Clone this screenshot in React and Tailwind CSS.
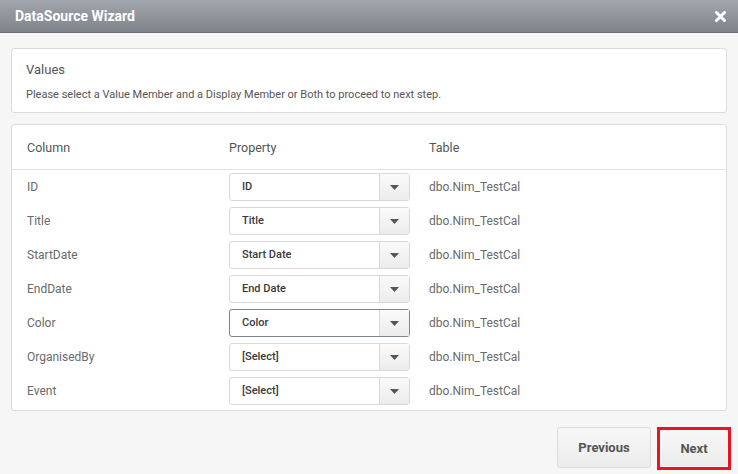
const rows = [
  { column: 'ID', value: 'ID' },
  { column: 'Title', value: 'Title' },
  { column: 'StartDate', value: 'Start Date' },
  { column: 'EndDate', value: 'End Date' },
  { column: 'Color', value: 'Color', focused: true },
  { column: 'OrganisedBy', value: '[Select]' },
  { column: 'Event', value: '[Select]' },
]

function SelectBox({ value, focused }) {
  return (
    <div
      className={`flex h-[28px] w-[181px] items-stretch rounded-[3px] border bg-white ${
        focused ? 'border-[#7d8590]' : 'border-[#d6d9dd]'
      }`}
    >
      <div className="flex flex-1 items-center pl-[12px] text-[11px] font-medium text-[#3a3a3a]">{value}</div>
      <div className="flex w-[30px] items-center justify-center border-l border-[#d6d9dd] bg-gradient-to-b from-[#fafafa] to-[#ececec]">
        <svg width="9" height="5" viewBox="0 0 9 5">
          <path d="M0 0h9L4.5 5z" fill="#555" />
        </svg>
      </div>
    </div>
  )
}

export default function App() {
  return (
    <div className="flex h-[474px] w-[738px] flex-col bg-[#f6f6f6] font-['Roboto',sans-serif]">
      <div className="flex h-[33px] items-center justify-between border-b border-[#6e737b] bg-gradient-to-b from-[#a2a6ac] to-[#7f838b] px-[15px]">
        <span className="text-[14px] font-bold text-white">DataSource Wizard</span>
        <svg width="11" height="11" viewBox="0 0 11 11" className="mr-[-3px]">
          <path d="M1.5 1.5l8 8M9.5 1.5l-8 8" stroke="white" strokeWidth="3" strokeLinecap="round" />
        </svg>
      </div>

      <div className="mx-[11px] mt-[15px] flex h-[65px] flex-col rounded-[3px] border border-[#dcdcdc] bg-white px-[14px]">
        <div className="mt-[11px] text-[13px] text-[#555]">Values</div>
        <div className="mt-[7px] text-[11px] text-[#555]">
          Please select a Value Member and a Display Member or Both to proceed to next step.
        </div>
      </div>

      <div className="mx-[11px] mt-[11px] flex h-[287px] flex-col rounded-[3px] border border-[#dcdcdc] bg-white">
        <div className="flex h-[45px] items-center border-b border-[#e2e2e2] pt-[2px] text-[12.5px] text-[#555]">
          <div className="w-[217px] pl-[15px]">Column</div>
          <div className="w-[200px]">Property</div>
          <div>Table</div>
        </div>
        {rows.map((r) => (
          <div key={r.column} className="flex h-[34px] items-center text-[12px] text-[#6a6a6a]">
            <div className="w-[217px] pl-[15px]">{r.column}</div>
            <div className="w-[200px]">
              <SelectBox value={r.value} focused={r.focused} />
            </div>
            <div>dbo.Nim_TestCal</div>
          </div>
        ))}
      </div>

      <div className="mr-[7px] mt-[16px] flex justify-end gap-[6px]">
        <button className="h-[41px] w-[94px] rounded-[3px] border border-[#dcdcdc] bg-gradient-to-b from-[#f7f7f7] to-[#ececec] text-[13px] font-bold text-[#555]">
          Previous
        </button>
        <div className="border-[3px] border-[#e8141e] p-[1px]">
          <button className="h-[35px] w-[66px] rounded-[2px] bg-gradient-to-b from-[#f7f7f7] to-[#ececec] text-[13px] font-bold text-[#555]">
            Next
          </button>
        </div>
      </div>
    </div>
  )
}
